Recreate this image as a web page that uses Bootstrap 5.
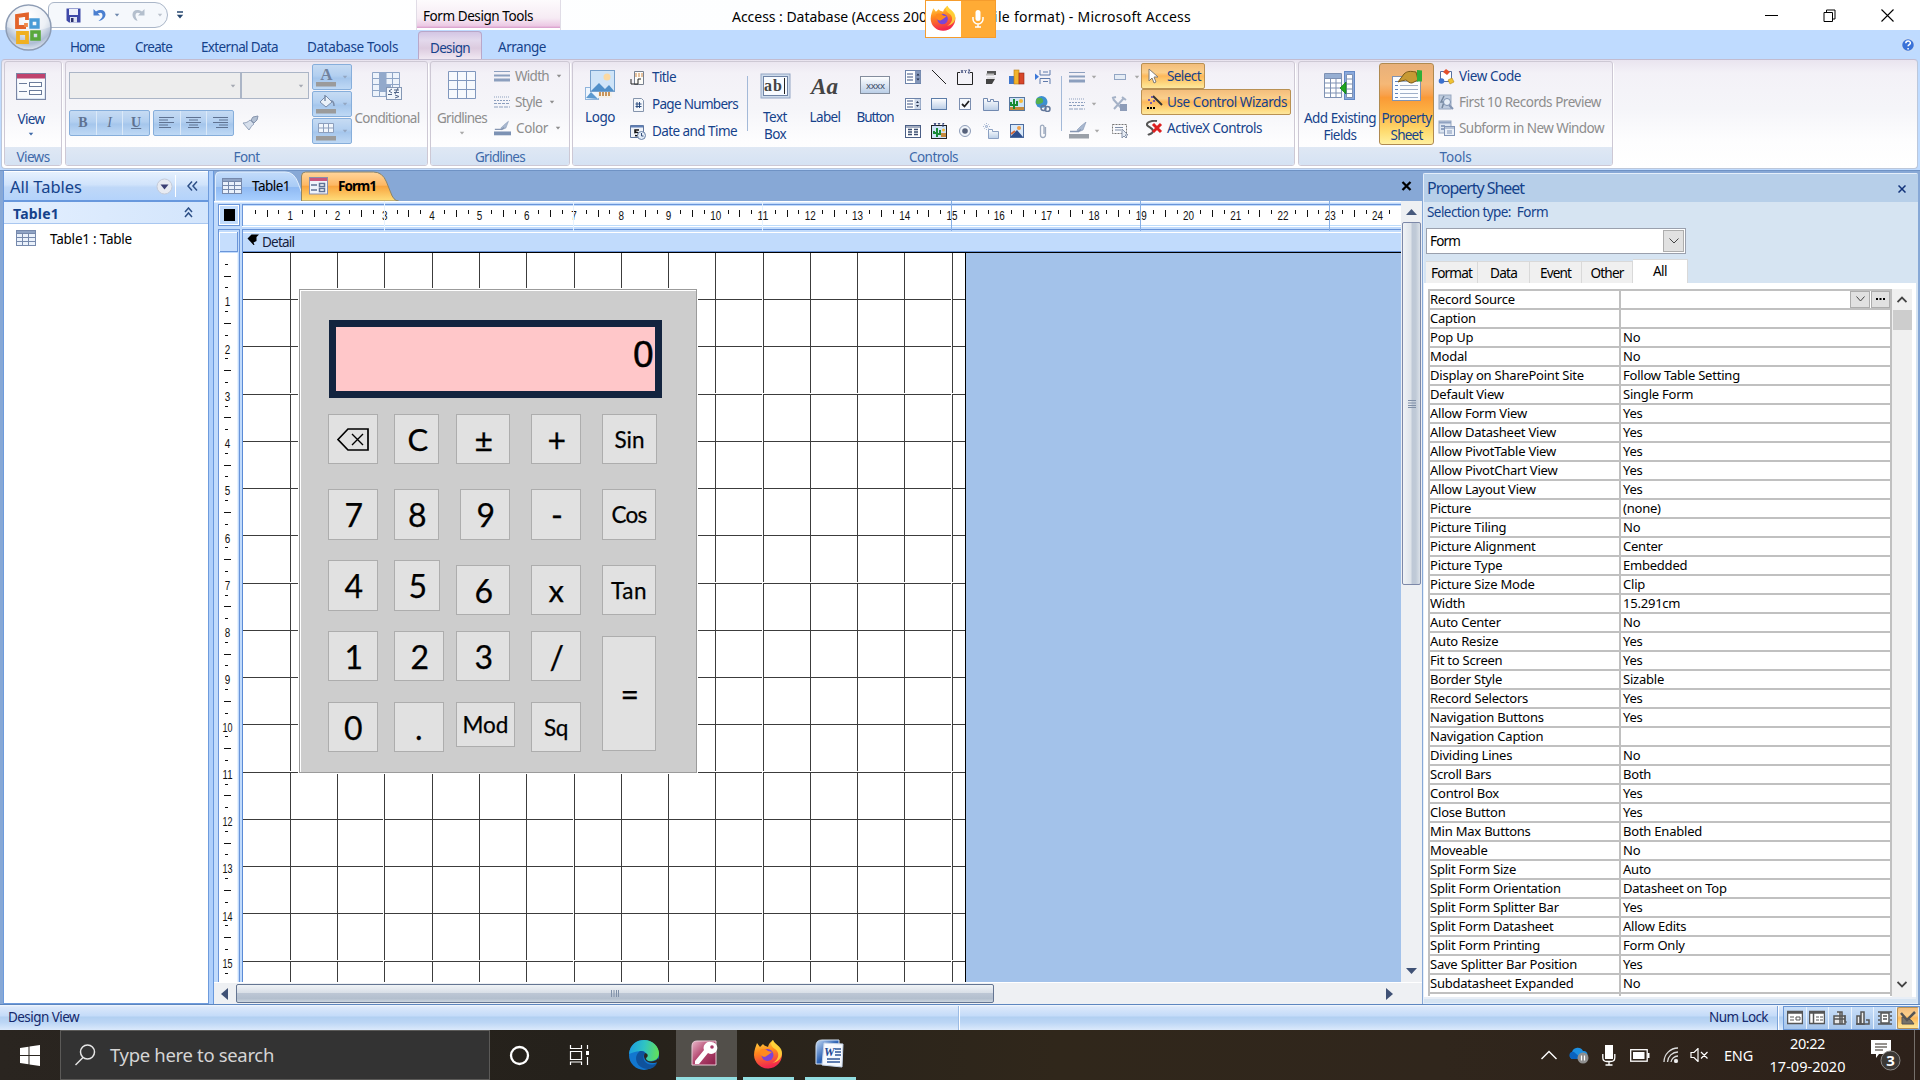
<!DOCTYPE html>
<html lang="en">
<head>
<meta charset="utf-8">
<title>Access : Database - Microsoft Access</title>
<link href="https://cdn.jsdelivr.net/npm/bootstrap@5.3.0/dist/css/bootstrap.min.css" rel="stylesheet">
<style>
body{width:1920px;height:1080px;overflow:hidden;font:13.5px/17px "Noto Sans","Open Sans",sans-serif;color:#15428b;background:#bfdbff}
svg{display:block;flex:none}
[data-w]{display:inline-block;white-space:pre;flex:none}
.titlebar{height:30px;background:linear-gradient(90deg,#fff 0,#fdfeff 40%,#fff 60%);color:#000}
.orb{position:absolute;left:4px;top:3px;z-index:5}
.qat{margin-left:48px;width:120px;height:26px;margin-top:2px;border:1px solid #aab6c8;border-radius:6px 13px 13px 0;background:#f5f8fc;padding-left:17px;gap:12px}
.ctx{width:145px;height:30px;background:linear-gradient(#fdfbfd,#f6ebf4 60%,#ecc9e4 86%,#d99ccb 93%,#fff 95%);border-left:1px solid #e0dce6;border-right:1px solid #e0dce6;padding:3px 0 0 6px}
.share{position:absolute;left:925px;top:0;width:71px;height:38px;border:1px solid #f59c2d;z-index:6;background:#fff}
.share .mic{background:#ffab35;width:34px}
.tabstrip{height:29px;background:#bfdbff}
.tabstrip [data-w]{padding-top:5px}
.dtab{width:64px;height:28px;margin-top:1px;border:1px solid #b9a7c9;border-bottom:0;border-radius:4px 4px 0 0;background:linear-gradient(#d3c6e4,#e3d9ec 30%,#dccbdf 60%,#f0e8f2)}
.ribbon{height:110px;margin:0 2px 0 1px;border:1px solid #bcc7da;border-top:1px solid #c3bcd0;border-radius:4px;background:linear-gradient(#e9e4ef,#f3f1f7 12%,#f5f5f9 45%,#fdfdfe 75%,#fff);padding:1px 2px}
.rgroup{height:105px;border:1px solid #cdc8d4;border-radius:3px;flex:none;overflow:hidden;box-shadow:1px 1px 0 #fff}
.rgroup .gbody{height:85px}
.rgroup .glabel{height:19px;background:linear-gradient(#dfe8f4,#d5e2f3);color:#3e6aaa;text-align:center;line-height:20px}
.rbig{flex:none;text-align:center}
.dis{color:#8d8d8d}
.bluebtns{border:1px solid #86aedb;border-radius:2px;background:linear-gradient(#c6dbf3,#b2cff0 45%,#a5c6ec 55%,#bfd9f5);color:#5f7291}
.bluebtns>div+div{border-left:1px solid #dbe9f8}
.hot{border:1px solid #b99153;background:linear-gradient(#f3bd7c,#fbcf8b 35%,#fdb85a 50%,#fedc86 85%,#fde79d);border-radius:2px}
.hotbig{border:1px solid #b08a50;border-radius:3px;background:linear-gradient(#e8b07a,#f5b877 25%,#f8a24e 38%,#fa9a36 42%,#fdb445 62%,#fedd72 85%,#fff0a0)}
.vsep{width:1px;height:55px;background:#a3b9d8;flex:none}
.ig{display:grid;grid-template-columns:repeat(6,26px);grid-template-rows:repeat(3,27px);justify-items:center;align-items:center}
.work{height:834px;background:#87a8d6;border-top:1px solid #6f92c4}
.navpane{width:206px;margin-left:3px;background:#fff;border:1px solid #6e9bdc;border-left:1px solid #6e9bdc;border-top:0}
.navhead{height:31px;background:linear-gradient(#e6f1fe,#d0e3fb 45%,#bfd8f8 55%,#b4d3fb);border-bottom:2px solid #6898dd;border-top:1px solid #fff}
.navgrp{height:22px;background:linear-gradient(90deg,#e3effe,#d3e5fc);border-bottom:1px solid #a9c7f0}
.split{width:5px;background:#aecffb;border-right:1px solid #6898dd}
.docarea{width:1208px}
.doctabs{height:30px;background:#87a8d6;color:#000}
.rulerarea{background:#bfdbff}
.designer{width:1187px}
.vscroll{width:21px;background:#eef0f3}
.canvas{width:1158px;height:729px;position:relative;overflow:hidden;background:#fff}
.calcpanel{position:absolute;left:86px;top:88px;width:398px;height:484px;background:#cdcdcd;border:1px solid #9b9b9b;box-shadow:inset 1px 1px 0 #fff, 0 0 0 1px #fff}
.calcdisp{position:absolute;left:116px;top:119px;width:333px;height:78px;background:#ffc7c9;border:7px solid #13243f;color:#000;font:37px/50px "Noto Sans",sans-serif;-webkit-text-stroke:.5px #000;text-align:right;padding:1px 1px 0 0}
.key{position:absolute;background:#e1e1e1;border:1px solid #adadad;color:#000;font-family:Lato,"Noto Sans",sans-serif;-webkit-text-stroke:.25px #000;display:flex;align-items:center;justify-content:center}
.hscroll{height:22px;background:#eef0f3;border-top:1px solid #fff}
.hthumb{width:758px;height:19px;border:1px solid #647592;border-radius:2px;background:linear-gradient(#f0f3f6,#d9dfe7 45%,#bcc6d4 50%,#b3bfce 80%,#ccd5df)}
.vthumb{width:19px;height:363px;border:1px solid #7c88a8;border-radius:2px;background:linear-gradient(90deg,#f0f3f6,#dfe4ea 45%,#bec8d6 55%,#c0cad7 75%,#dbe1e8)}
.psheet{width:495px;margin:2px 0 0 1px;background:#d6e4f2;border:1px solid #e4eefa;border-right:0;border-radius:2px 2px 0 0}
.pshead{height:28px;background:#b7cfe9;font-size:16px;padding:1px 12px 0 3px}
.pscombo{width:260px;height:26px;border:1px solid #9aa0ad;background:#fff;color:#000;margin:11px 0 0 2px;padding-left:3px}
.pscombo .dd,.sb{background:#e1e1e1;border:1px solid #adadad}
.pstabs{margin:5px 0 0 2px;height:24px;color:#000;font-size:13.6px}
.pstabs>div{width:52px;height:22px;background:#f0f0f0;border:1px solid #d9d9d9;border-left-width:0;border-bottom:0;line-height:22px;text-align:center}
.pstabs>.on{width:55px;height:24px;background:#fff;line-height:22px}
.pspage{background:#fff;height:716px;width:492px;padding:6px 0 0 4px;color:#000;border-bottom:2px solid #e8eef6}
.proptable{width:464px;height:707px;overflow:hidden;background:#c0c0c0;padding:2px 0 0 2px;font-size:13px;letter-spacing:-.22px}
.prow{height:19px;line-height:16px}
.prow>div{height:16.5px;background:#fff;overflow:hidden;white-space:nowrap}
.prow .pn{width:189px;margin-right:2px}
.prow .pv{width:269px;padding-left:2px}
.statusbar{height:26px;border-top:1px solid #5d86bf;background:linear-gradient(#f3f8fe 0,#dbe8fa 8%,#c4dbf9 44%,#b1cff1 48%,#bcd6f5 70%,#dbe9fb);color:#15286b;padding-left:8px}
.viewbtns{height:24px;width:137px;background:linear-gradient(#c8def8,#a5c4ea);border:1px solid #6a97d6}
.viewbtns>div{width:22.6px;height:22px;border-right:1px solid #eaf3fd}
.taskbar{height:50px;background:linear-gradient(90deg,#2a2520,#25211b 30%,#30271b 55%,#30261c 75%,#2d211a);color:#fff}
.searchbox{width:430px;height:50px;background:#333;border:1px solid #5b5a58;font-size:18.5px;color:#d5d5d5}
.tbtn{height:50px;border-bottom:3px solid #92dde0;margin-right:8px}
</style>
<script src="https://cdn.jsdelivr.net/npm/bootstrap@5.3.0/dist/js/bootstrap.bundle.min.js"></script>
</head>
<body class="position-relative d-flex flex-column">
<svg width="0" height="0" class="position-absolute">
<defs>
<linearGradient id="gw" x2="0" y2="1"><stop stop-color="#fff"/><stop offset="1" stop-color="#b9cde6"/></linearGradient>
<linearGradient id="gff" x2="0.2" y2="1"><stop stop-color="#ffe14a"/><stop offset=".45" stop-color="#ff8a1d"/><stop offset="1" stop-color="#f2274e"/></linearGradient>
<linearGradient id="gedge" x1="0" x2="1" y1="0.3" y2="0.4"><stop stop-color="#1b9de2"/><stop offset=".5" stop-color="#2fc3c4"/><stop offset="1" stop-color="#62e05a"/></linearGradient>
<linearGradient id="gacc" x2="1" y2="1"><stop stop-color="#e9b9ca"/><stop offset=".45" stop-color="#b64a72"/><stop offset="1" stop-color="#8b1e49"/></linearGradient>
<linearGradient id="gword" x2="1" y2="1"><stop stop-color="#c7dcf5"/><stop offset=".5" stop-color="#2f64b5"/><stop offset="1" stop-color="#173f8c"/></linearGradient>
<radialGradient id="gorb" cx=".5" cy=".25" r=".8"><stop stop-color="#fff"/><stop offset=".5" stop-color="#e2e8f1"/><stop offset=".75" stop-color="#aebdd3"/><stop offset="1" stop-color="#eef4fb"/></radialGradient>
</defs>
<symbol id="car" viewBox="0 0 8 5"><path d="M1 .8h6L4 4.4z" fill="currentColor"/></symbol>
<symbol id="formicon" viewBox="0 0 30 28"><rect x=".5" y=".5" width="29" height="26" fill="url(#gw)" stroke="#7a86a5"/><rect x="1" y="1" width="28" height="4.5" fill="#c0436e"/><rect x="1.5" y="6" width="27" height="19.500" fill="#f9fbfe"/><path d="M3 10.500h8M3 18.500h8" stroke="#6b7c9b"/><rect x="13.500" y="9.500" width="12" height="4" fill="#fff" stroke="#6b7c9b"/><rect x="13.500" y="17.500" width="12" height="4" fill="#fff" stroke="#6b7c9b"/></symbol>
<symbol id="formsmall" viewBox="0 0 19 18"><rect x=".5" y=".5" width="18" height="16.500" fill="#eef3fb" stroke="#8a8fae"/><rect x="1" y="1" width="17" height="3" fill="#c9567d"/><path d="M2 8h6M2 13h6" stroke="#5f7296" stroke-width="1.300"/><rect x="10.500" y="6.500" width="5" height="3" fill="#fff" stroke="#5f7296" stroke-width="1.500"/><rect x="10.500" y="11.500" width="5" height="3" fill="#fff" stroke="#5f7296" stroke-width="1.500"/></symbol>
<symbol id="tableicon" viewBox="0 0 20 16"><rect width="20" height="16" fill="#7689ac"/><path d="M1 4h5v3H1zM7 4h5v3H7zM13 4h6v3h-6zM1 8h5v3H1zM7 8h5v3H7zM13 8h6v3h-6zM1 12h5v3H1zM7 12h5v3H7zM13 12h6v3h-6z" fill="#eaf1fb"/><path d="M1 1h18v2H1z" fill="#8fa3c4"/></symbol>
<symbol id="lines3" viewBox="0 0 16 12"><path d="M0 1.500h16" stroke="#8c9fbe"/><path d="M0 5.500h16" stroke="#8c9fbe" stroke-width="2"/><path d="M0 10h16" stroke="#8c9fbe" stroke-width="3"/></symbol>
<symbol id="dash3" viewBox="0 0 16 12"><path d="M0 1h16" stroke="#8c9fbe" stroke-dasharray="1 1"/><path d="M0 4.500h16" stroke="#8c9fbe" stroke-dasharray="2 1"/><path d="M0 7.500h16" stroke="#8c9fbe" stroke-dasharray="3 1"/><path d="M0 11h16" stroke="#8c9fbe" stroke-dasharray="4 1"/></symbol>
<symbol id="brushc" viewBox="0 0 20 17"><path d="M17 0l-3 8-5 2-1-2 4-4z" fill="#a8b8d0" stroke="#8394b1" stroke-width=".6"/><path d="M1 9.500h8l3-2" stroke="#8696b2" fill="none" stroke-width="1.500"/><rect x="0" y="12" width="20" height="4.500" fill="var(--bar,#9aa0a8)"/></symbol>
<symbol id="ff" viewBox="0 0 30 30"><path d="M20 1c1 4 8 6 9 14a14 14 0 0 1-28 1C1 11 3 7 4 4l3 4 3-3c1 2 4 2 5 3 1-4 3-5 5-7z" fill="url(#gff)"/><path d="M20 1c-4 4-1 7 2 9 6 4 3 12-3 14 8-1 12-8 9-14-2-4-7-5-8-9z" fill="#ffd93b" opacity=".85"/><circle cx="14.500" cy="16" r="6" fill="#7b45d6"/><path d="M7 11c3-2 6-1 8 1l4 1-4 3c-2 1-3 3-6 1-2-1-2-4-2-6z" fill="#ff8a1d"/></symbol>
<symbol id="ic-list" viewBox="0 0 16 16"><rect x=".5" y="1.500" width="15" height="13" fill="#fff" stroke="#6d83aa"/><path d="M2 5h6M2 8h6M2 11h6" stroke="#7d8cab" stroke-width="1.500"/><rect x="10" y="2" width="5.500" height="12" fill="#8496b8"/><path d="M11.500 6.500h3L13 4.500zM11.500 9.500h3L13 11.500z" fill="#1e2c48"/></symbol>
</svg>

<!-- Title bar -->
<div class="titlebar d-flex">
  <div class="qat d-flex align-items-center">
    <svg width="15" height="15" viewBox="0 0 15 15"><path d="M.5.500h14v14H3l-2.500-2z" fill="#3f49a8"/><rect x="3" y="1" width="9" height="6" fill="#eef1fb"/><rect x="4" y="9" width="7" height="5.500" fill="#dfe4f4"/><rect x="5" y="10" width="2.500" height="4" fill="#2a2f6b"/></svg>
    <svg width="13" height="14" viewBox="0 0 13 14"><path d="M.5 1v6.500H7L4.800 5.300C8 3.800 9.500 5 9.500 7.500c0 2-1.500 3.500-4 5.500 4-.5 7-3.500 7-6.500C12.500 2 8 .5 3 3.400z" fill="#4a7fd0"/></svg>
    <svg width="6" height="4" style="color:#6e87ad;margin-left:-4px"><use href="#car"/></svg>
    <svg width="13" height="14" viewBox="0 0 13 14"><path d="M12.500 1v6.500H6l2.200-2.200C5 3.800 3.500 5 3.500 7.500c0 2 1.500 3.500 2 5.500C2 12 .5 9 .5 6.500.5 2 5 .5 10 3.400z" fill="#b4bfcd"/></svg>
    <svg width="6" height="4" style="color:#bbc2cc"><use href="#car"/></svg>
  </div>
  <svg class="align-self-center" style="margin-left:8px" width="8" height="8" viewBox="0 0 8 8"><path d="M1 1h6" stroke="#27476f" stroke-width="1.500"/><path d="M.8 3.800h6.400L4 7.500z" fill="#27476f"/></svg>
  <div class="ctx d-flex align-items-center" style="margin-left:232px"><span data-w="110">Form Design Tools</span></div>
  <div class="d-flex align-items-center" style="margin-left:171px;height:32px;font-size:14px"><span data-w="187">Access : Database (Access 20</span><span data-w="79">02 - 2003 fi</span><span data-w="193">le format) - Microsoft Access</span></div>
  <div class="d-flex align-items-center" style="margin-left:574px;gap:45px">
    <svg width="13" height="13"><path d="M0 6.500h13" stroke="#000"/></svg>
    <svg width="13" height="13" viewBox="0 0 13 13"><path d="M1 3.500h8.500v9H1zM3.500 3.500V1H12v9H9.500" fill="none" stroke="#000"/></svg>
    <svg width="13" height="13"><path d="M.5.500l12 12M12.500.500l-12 12" stroke="#000" stroke-width="1.100"/></svg>
  </div>
</div>
<svg class="orb" width="50" height="50" viewBox="0 0 50 50"><circle cx="24.500" cy="24.500" r="22.500" fill="url(#gorb)" stroke="#8d9cb4" stroke-width="1.500"/><path d="M3 24a21.500 21.500 0 0 1 43 0c-14 5-29 5-43 0z" fill="#fff" opacity=".35"/>
<g fill="none" stroke-width="3.800"><path d="M22 24h-9V13l10-1.500v5.500" stroke="#e2632b"/><path d="M22 24v-4" stroke="#f08a4a"/><path d="M27 19v-2h7v7h-7z" stroke="#4a9bd6" stroke-width="3.400"/><path d="M23 28v11h-9v-9h9" stroke="#f0b021"/><path d="M28 29h7v7h-7z" stroke="#58a83c" stroke-width="3.600"/></g></svg>
<div class="share d-flex">
  <svg width="35" height="36" viewBox="-4 -3 37 38"><use href="#ff" width="28" height="30"/></svg>
  <div class="mic d-flex align-items-center justify-content-center"><svg width="12" height="18" viewBox="0 0 12 18"><rect x="3.500" width="5" height="11" rx="2.500" fill="#fff"/><path d="M1 7v2a5 5 0 0 0 10 0V7M6 14v3M3 17h6" fill="none" stroke="#fff" stroke-width="1.500"/></svg></div>
</div>

<!-- Ribbon tabs -->
<div class="tabstrip d-flex align-items-center" style="padding-left:70px">
  <span data-w="34">Home</span><span data-w="37" style="margin-left:31px">Create</span><span data-w="77" style="margin-left:29px">External Data</span><span data-w="91" style="margin-left:29px">Database Tools</span>
  <div class="dtab d-flex align-items-center justify-content-center" style="margin-left:20px"><span data-w="40">Design</span></div>
  <span data-w="48" style="margin-left:16px">Arrange</span>
  <svg class="ms-auto me-1" width="16" height="16" viewBox="0 0 16 16"><circle cx="8" cy="8" r="6.500" fill="#3a72d8" stroke="#c8dcf7" stroke-width="1.500"/><path d="M5.800 6.300c0-3 4.600-3 4.600-.3 0 1.600-2.300 1.600-2.300 3.300M8.100 11v1.500" fill="none" stroke="#fff" stroke-width="1.500"/></svg>
</div>

<!-- Ribbon -->
<div class="ribbon d-flex">
  <div class="rgroup" style="width:58px"><div class="gbody d-flex flex-column align-items-center pe-1">
    <svg style="margin-top:11px" width="30" height="28"><use href="#formicon"/></svg><span class="mt-2" style="padding-top:2px" data-w="27">View</span><svg class="mt-1" style="color:#3f6aa8" width="6" height="4"><use href="#car"/></svg></div>
    <div class="glabel"><span data-w="33">Views</span></div></div>

  <div class="rgroup" style="width:363px;margin-left:3px"><div class="gbody d-flex">
    <div style="width:243px;padding:10px 0 0 3px">
      <div class="d-flex" style="color:#a5a9b2"><div class="d-flex justify-content-end align-items-center pe-1" style="width:174px;height:27px;border:1px solid #abb5c6;background:#ededed"><svg width="6" height="4"><use href="#car"/></svg></div><div class="d-flex justify-content-end align-items-center pe-1" style="width:69px;height:27px;border:1px solid #abb5c6;background:#ededed"><svg width="6" height="4"><use href="#car"/></svg></div></div>
      <div class="d-flex align-items-center" style="margin-top:11px">
        <div class="bluebtns d-flex align-items-center text-center" style="width:81px;height:26px;font:bold 14px/24px 'Liberation Serif',serif"><div style="width:26px">B</div><div class="fst-italic" style="width:27px;font-weight:400">I</div><div class="text-decoration-underline" style="width:27px">U</div></div>
        <div class="bluebtns d-flex align-items-center" style="width:81px;height:26px;margin-left:3px">
          <div class="d-flex justify-content-center align-items-center h-100" style="width:26px"><svg width="15" height="12"><path d="M0 .5h15M0 3h9M0 5.500h15M0 8h9M0 10.500h12" stroke="#5f7291"/></svg></div>
          <div class="d-flex justify-content-center align-items-center h-100" style="width:27px"><svg width="15" height="12"><path d="M0 .5h15M3 3h9M0 5.500h15M3 8h9M2 10.500h11" stroke="#5f7291"/></svg></div>
          <div class="d-flex justify-content-center align-items-center h-100" style="width:27px"><svg width="15" height="12"><path d="M0 .5h15M6 3h9M0 5.500h15M6 8h9M3 10.500h12" stroke="#5f7291"/></svg></div></div>
        <svg style="margin-left:8px" width="17" height="16" viewBox="0 0 17 16"><path d="M16 1l-5 1-2 3 3 3 3-3z" fill="#b3c0d3" stroke="#8795ad"/><path d="M8 5l4 4c-2 1-3 3-5 6L1 8c3 0 5-1 7-3z" fill="#d6dfec" stroke="#94a3bb"/></svg>
      </div></div>
    <div class="d-flex flex-column" style="margin:2px 0 0 3px;gap:1px;color:#a3acb9">
      <div class="bluebtns d-flex align-items-center" style="width:40px;height:26px;padding-left:3px"><svg width="21" height="24" viewBox="0 0 21 24"><text x="10.500" y="15" text-anchor="middle" font-family="Liberation Serif" font-weight="bold" font-size="17" fill="#70829e">A</text><rect y="17" width="20" height="4.500" fill="#9b9b9b"/></svg><svg style="margin-left:5px;color:#93a6c1" width="6" height="4"><use href="#car"/></svg></div>
      <div class="bluebtns d-flex align-items-center" style="width:40px;height:26px;padding-left:3px"><svg width="21" height="24" viewBox="0 0 21 24"><path d="M10 4l6 6-6 5-6-5z" fill="#eaf1f9" stroke="#7a8ca9"/><path d="M9 9V3M15 9c3 0 3 3 3 5" stroke="#7a8ca9" fill="none" stroke-width="1.500"/><rect y="17" width="20" height="4.500" fill="#9b9b9b"/></svg><svg style="margin-left:5px;color:#93a6c1" width="6" height="4"><use href="#car"/></svg></div>
      <div class="bluebtns d-flex align-items-center" style="width:40px;height:26px;padding-left:3px"><svg width="21" height="24" viewBox="0 0 21 24"><path d="M2.500 4.500h15v9h-15zM7.500 4.500v9M12.500 4.500v9M2.500 9h15" fill="#f1f6fc" stroke="#8d9fbd"/><rect y="17" width="20" height="4.500" fill="#9b9b9b"/></svg><svg style="margin-left:5px;color:#93a6c1" width="6" height="4"><use href="#car"/></svg></div>
    </div>
    <div class="rbig dis" style="margin:9px 0 0 2px;width:66px"><svg class="mx-auto" width="32" height="30" viewBox="0 0 32 30"><path d="M1.500 1.500h27v24h-27zM1.500 7.500h27M1.500 13.500h27M1.500 19.500h27M8.500 1.500v24M15 1.500v24M21.500 1.500v24" fill="#edf3fb" stroke="#8fa5c6"/><path d="M8 1h7v12h5v8H8z" fill="#92a9cb"/><rect x="15.500" y="16.500" width="15" height="12" fill="#f2f6fb" stroke="#8497b5"/><path d="M21 18l-3 2 3 2M17 23.500h4M23 19h5M23 21.500h5M27 17l-3 6M24 24l4 1.500-4 1.500" fill="none" stroke="#4f6488"/></svg><span data-w="65" style="margin-top:9px">Conditional</span></div>
    </div><div class="glabel"><span data-w="26">Font</span></div></div>

  <div class="rgroup" style="width:140px;margin-left:2px"><div class="gbody d-flex dis">
    <div class="rbig" style="width:52px;margin:9px 0 0 5px"><svg class="mx-auto" width="29" height="29" viewBox="0 0 29 29"><path d="M.5.500h27v27H.5zM9.500.500v27M18.500.500v27M.5 9.500h27M.5 18.500h27" fill="#f6f9fd" stroke="#8097bd"/></svg><span data-w="50" style="margin-top:10px">Gridlines</span><svg class="mx-auto mt-1" width="6" height="4" style="color:#a9a9a9"><use href="#car"/></svg></div>
    <div style="margin:1px 0 0 6px">
      <div class="d-flex align-items-center" style="height:26px"><svg width="16" height="12"><use href="#lines3"/></svg><span style="margin-left:5px" data-w="34">Width</span><svg style="margin-left:7px" width="6" height="4"><use href="#car"/></svg></div>
      <div class="d-flex align-items-center" style="height:26px"><svg width="16" height="12"><use href="#dash3"/></svg><span style="margin-left:5px" data-w="27">Style</span><svg style="margin-left:7px" width="6" height="4"><use href="#car"/></svg></div>
      <div class="d-flex align-items-center" style="height:26px;--bar:#7c92b4"><svg width="17" height="17"><use href="#brushc"/></svg><span style="margin-left:5px" data-w="32">Color</span><svg style="margin-left:7px" width="6" height="4"><use href="#car"/></svg></div>
    </div></div><div class="glabel"><span data-w="50">Gridlines</span></div></div>

  <div class="rgroup" style="width:723px;margin-left:2px"><div class="gbody d-flex">
    <div class="rbig" style="width:32px;margin:7px 0 0 11px"><svg width="32" height="32" viewBox="0 0 32 32"><rect x="1.500" y="18.500" width="13" height="12" fill="#eef5fd" stroke="#8fb4dc"/><path d="M2 29l5-6 7 7z" fill="#5d99cf"/><rect x="14" y="21" width="14" height="8" fill="#f5f1ea"/><path d="M15 25h11" stroke="#c9955b" stroke-width="4" stroke-dasharray="2 1"/><rect x="6.500" y="1.500" width="24" height="21" fill="#cfe4f8" stroke="#77a0cc"/><circle cx="23" cy="8" r="3.500" fill="#fbd9a2"/><path d="M7 22l8-8 6 6 4-4 5 6z" fill="#4f8fc9"/></svg><span data-w="30" style="margin-top:8px">Logo</span></div>
    <div style="margin:2px 0 0 14px">
      <div class="d-flex align-items-center" style="height:27px"><svg width="16" height="16" viewBox="0 0 16 16"><path d="M4.500 1.500h9v13h-9z" fill="#fdfcf8" stroke="#77808f"/><path d="M5 4h8M5 6h8" stroke="#cc8545" stroke-dasharray="2 1"/><path d="M1 9v5h7v-5h3" fill="none" stroke="#222"/></svg><span style="margin-left:6px" data-w="24">Title</span></div>
      <div class="d-flex align-items-center" style="height:27px"><svg width="16" height="16" viewBox="0 0 16 16"><path d="M3.500 1.500h8l2 2v11h-10z" fill="#f4f7fb" stroke="#8594ac"/><path d="M7 5v6M9.500 5v6M5.500 7h6M5.500 9.500h6" stroke="#2c4d80"/></svg><span style="margin-left:6px" data-w="86">Page Numbers</span></div>
      <div class="d-flex align-items-center" style="height:27px"><svg width="16" height="16" viewBox="0 0 16 16"><path d="M.5 1.500h13v12H.5z" fill="#f0f3f8" stroke="#5f769e"/><path d="M1 2.500h12" stroke="#5f7fb5" stroke-width="2"/><path d="M9 6H5v2.500c5-1 5 4 0 3" fill="none" stroke="#111" stroke-width="1.500"/><circle cx="11.500" cy="11.500" r="4" fill="#e3ecf7" stroke="#6880a6"/><path d="M11.500 9v3h2" stroke="#36507c" fill="none"/></svg><span style="margin-left:6px" data-w="85">Date and Time</span></div></div>
    <div class="vsep" style="margin:14px 0 0 9px"></div>
    <div class="rbig" style="width:42px;margin:11px 0 0 6px"><svg class="mx-auto" width="31" height="26" viewBox="0 0 31 26"><rect x="1" y="1" width="29" height="24" fill="#cfdcec" stroke="#93a6c4"/><rect x="3.500" y="3.500" width="24" height="19" fill="#f8fbff" stroke="#6f83a5"/><text x="4" y="18" font-family="Liberation Serif" font-weight="bold" font-size="16" textLength="18" fill="#444">ab</text><path d="M24.500 5v16" stroke="#222"/></svg><span data-w="24" style="margin-top:10px">Text</span><br><span data-w="22">Box</span></div>
    <div class="rbig" style="width:42px;margin:11px 0 0 8px"><svg class="mx-auto overflow-visible" width="32" height="26" viewBox="0 0 32 26"><text x="2" y="21" font-family="Liberation Serif" font-style="italic" font-weight="bold" font-size="24" textLength="27" lengthAdjust="spacingAndGlyphs" fill="#444">Aa</text></svg><span data-w="31" style="margin-top:10px">Label</span></div>
    <div class="rbig" style="width:42px;margin:14px 0 0 8px"><svg class="mx-auto" width="31" height="19" viewBox="0 0 31 19"><rect x=".5" y=".5" width="29" height="17" fill="url(#gw)" stroke="#838d9d"/><text x="6" y="12.500" font-size="9.500" textLength="19" fill="#3b4a66">xxxx</text></svg><span data-w="37" style="margin-top:14px">Button</span></div>
    <div class="ig" id="ctlgrid" style="margin:1px 0 0 4px"></div>
    <div class="vsep" style="margin:14px 0 0 5px"></div>
    <div style="margin:1px 0 0 7px;width:73px;color:#a7a7a7">
      <div class="d-flex align-items-center" style="height:27px"><svg width="16" height="12"><use href="#lines3"/></svg><svg style="margin:0 17px 0 6px" width="6" height="4"><use href="#car"/></svg><svg width="12" height="6"><rect x=".5" y=".5" width="11" height="5" fill="#e5ecf5" stroke="#93a6c4"/></svg><svg style="margin-left:8px" width="6" height="4"><use href="#car"/></svg></div>
      <div class="d-flex align-items-center" style="height:27px"><svg width="16" height="12"><use href="#dash3"/></svg><svg style="margin:0 14px 0 6px" width="6" height="4"><use href="#car"/></svg><svg width="17" height="16" viewBox="0 0 17 16"><path d="M2 3l10 11M13 2L3 13M1 2l4-1M11 1l4 3" stroke="#a5b2c7" stroke-width="2" fill="none"/><rect x="9" y="8" width="7" height="7" fill="#8d9cb8"/></svg></div>
      <div class="d-flex align-items-center" style="height:27px"><svg width="20" height="17"><use href="#brushc"/></svg><svg style="margin:0 12px 0 5px" width="6" height="4"><use href="#car"/></svg><svg width="16" height="16" viewBox="0 0 16 16"><path d="M.5 1.500h14v9H.5z" fill="none" stroke="#777" stroke-dasharray="2 1"/><path d="M3 4.500h8M3 7h6" stroke="#7d8da8"/><path d="M10 6v9l2-2 2 2 1-1-2-2h3z" fill="#e8edf4" stroke="#8794aa"/></svg></div></div>
    <div style="margin:1px 0 0 -1px">
      <div class="hot d-flex align-items-center" style="width:64px;height:26px;padding-left:6px"><svg width="12" height="16" viewBox="0 0 12 16"><path d="M1 1v12l3-3 2 5 2-1-2-5h4z" fill="#fff" stroke="#7e7b76"/></svg><span style="margin-left:7px" data-w="34">Select</span></div>
      <div class="hot d-flex align-items-center" style="width:150px;height:26px;padding-left:4px"><svg width="17" height="16" viewBox="0 0 17 16"><path d="M7 2l9 9" stroke="#333" stroke-width="2"/><path d="M2 6h2M5 3h2M4 9h2M7 7h2" stroke="#7b5fa8" stroke-width="2"/><path d="M1 14h9" stroke="#000" stroke-width="2" stroke-dasharray="2 1"/></svg><span style="margin-left:4px" data-w="120">Use Control Wizards</span></div>
      <div class="d-flex align-items-center" style="height:26px;padding-left:5px"><svg width="17" height="16" viewBox="0 0 17 16"><path d="M11 1C5 0 0 3 1 5c1 2 6 3 6 6s-4 3-5 4" fill="none" stroke="#555" stroke-width="2"/><path d="M7 4l8 8M15 4l-8 8" stroke="#dd2020" stroke-width="3"/></svg><span style="margin-left:4px" data-w="95">ActiveX Controls</span></div></div>
    </div><div class="glabel"><span data-w="49">Controls</span></div></div>

  <div class="rgroup" style="width:315px;margin-left:3px"><div class="gbody d-flex">
    <div class="rbig" style="width:74px;margin:8px 0 0 4px"><svg class="mx-auto" width="32" height="31" viewBox="0 0 32 31"><path d="M.5 3.500h17v24H.5zM.5 8.500h17M.5 13h17M.5 18h17M.5 23h17M6.500 4v23M12 4v23" fill="#fff" stroke="#7e91b3"/><path d="M1 4h16v4H1z" fill="#96aed2"/><rect x="20.500" y="1.500" width="10" height="28" fill="#8aa9dc" stroke="#6488c4"/><path d="M22.500 4.500h6v23h-6zM22.500 9h6M22.500 14h6M22.500 19h6M22.500 23.500h6" fill="#fff" stroke="#7e91b3"/><path d="M16 18l6-6v12z" fill="#1fa51f" stroke="#0c7a12" stroke-width=".7"/></svg><span data-w="72" style="margin-top:9px">Add Existing</span><br><span data-w="33">Fields</span></div>
    <div class="hotbig rbig" style="width:55px;height:82px;margin:1px 0 0 2px;padding-top:5px"><svg class="mx-auto" width="32" height="33" viewBox="0 0 32 33"><rect x="1.500" y="7.500" width="28" height="24" fill="#fbfdff" stroke="#8093b3"/><path d="M4 12.500h3M4 16.500h3M4 20.500h3M4 24.500h3M4 28.500h3" stroke="#5d83bd"/><path d="M9 12.500h18M9 16.500h18M9 20.500h18M9 24.500h18M9 28.500h18" stroke="#9fb0c9"/><path d="M7 13l6-8c3-3 6-3 12-2l2 8-6 3c-3 0-3-1-6-3l-5 1z" fill="#c79a34" stroke="#7a5a18"/><path d="M26 1l5 .5v11h-5z" fill="#2fae38"/></svg><span data-w="50" style="margin-top:8px">Property</span><br><span data-w="32">Sheet</span></div>
    <div style="margin:1px 0 0 4px">
      <div class="d-flex align-items-center" style="height:26px"><svg width="17" height="17" viewBox="0 0 17 17"><path d="M2.500 3.500h11v10h-11z" fill="#fff" stroke="#5870a0"/><path d="M8 1l4 3-3 3-4-3z" fill="#e4502c"/><circle cx="3.500" cy="13" r="2.800" fill="#3a70cf"/><path d="M10 12l4-2 2 4-4 2z" fill="#f0c233" stroke="#b98615" stroke-width=".6"/></svg><span class="ms-1" data-w="62">View Code</span></div>
      <div class="d-flex align-items-center dis" style="height:26px"><svg width="17" height="17" viewBox="0 0 17 17"><rect x="1" y="1" width="12" height="14" fill="#bfccdf" stroke="#97a7c0"/><path d="M6 2L3 8h3l-2 6" stroke="#75879f" stroke-width="1.500" fill="none"/><circle cx="9" cy="8" r="3.500" fill="#e7eef7" stroke="#7d91b1"/><path d="M11 11l4 4" stroke="#8395b3" stroke-width="2"/></svg><span class="ms-1" data-w="142">First 10 Records Preview</span></div>
      <div class="d-flex align-items-center dis" style="height:26px"><svg width="17" height="17" viewBox="0 0 17 17"><rect x="1" y="1" width="12" height="12" fill="#dce5f1" stroke="#97a7c0"/><path d="M1 2.500h12M3 6h4M3 9h3" stroke="#8fa2c1" stroke-width="2"/><rect x="6.500" y="6.500" width="10" height="9" fill="#eaf0f8" stroke="#8195b7"/><path d="M6.500 8h10M9 11h5M9 13h5" stroke="#8195b7"/></svg><span class="ms-1" data-w="145">Subform in New Window</span></div></div>
    </div><div class="glabel"><span data-w="32">Tools</span></div></div>
</div>

<!-- Workspace -->
<div class="work d-flex" style="margin-top:1px">
  <div class="navpane flex-shrink-0">
    <div class="navhead d-flex align-items-center"><span style="margin-left:6px;font-size:16.5px;padding-top:1px" data-w="72">All Tables</span>
      <svg style="margin-left:74px" width="17" height="17"><circle cx="8.500" cy="8.500" r="7.500" fill="#e8ebf2" stroke="#c4cbd9"/><path d="M4.500 6.500h8l-4 5z" fill="#3b3f74"/></svg>
      <div style="width:1px;height:22px;background:#fff;margin-left:2px"></div>
      <svg style="margin-left:11px" width="11" height="10"><path d="M5 .5l-4 4.500 4 4.500M10 .5l-4 4.500 4 4.500" fill="none" stroke="#2d4f86" stroke-width="1.500"/></svg></div>
    <div class="navgrp d-flex align-items-center fw-bold" style="font-size:14px"><span style="margin-left:9px;padding-top:1px" data-w="46">Table1</span><svg style="margin-left:125px" width="9" height="11"><path d="M1 5l3.500-4L8 5M1 10l3.500-4L8 10" fill="none" stroke="#2d4f86" stroke-width="1.500"/></svg></div>
    <div class="d-flex align-items-center text-black" style="height:28px;padding-left:12px"><svg width="20" height="16"><use href="#tableicon"/></svg><span style="margin-left:14px;padding-top:2px" data-w="82">Table1 : Table</span></div>
  </div>
  <div class="split flex-shrink-0"></div>

  <div class="docarea flex-shrink-0 d-flex flex-column">
    <div class="doctabs d-flex">
      <div class="position-relative" style="width:185px;height:30px"><svg class="position-absolute top-0 start-0" width="185" height="30"><defs><linearGradient id="t1" x2="0" y2="1"><stop stop-color="#c3dcfb"/><stop offset=".5" stop-color="#a9cbf5"/><stop offset=".52" stop-color="#8fb9f2"/><stop offset="1" stop-color="#a9d0ff"/></linearGradient><linearGradient id="t2" x2="0" y2="1"><stop stop-color="#ffd59c"/><stop offset=".45" stop-color="#fdb864"/><stop offset=".5" stop-color="#f9a640"/><stop offset="1" stop-color="#ffdf7c"/></linearGradient></defs><path d="M1.500 30V5q0-4 4-4h66q9 0 13 12l6 17z" fill="url(#t1)" stroke="#e0edfc"/><path d="M87.500 30V5q0-4 4-4h68q9 0 13 10l4 10q3 9 8 9z" fill="url(#t2)" stroke="#8b8468"/></svg>
        <div class="position-relative d-flex align-items-center" style="height:30px;padding-left:8px"><svg width="20" height="16"><use href="#tableicon"/></svg><span style="margin-left:10px" data-w="38">Table1</span><svg style="margin-left:19px" width="19" height="18"><use href="#formsmall"/></svg><span class="fw-bold" style="margin-left:10px" data-w="38">Form1</span></div></div>
      <svg class="ms-auto align-self-center" style="margin-right:10px" width="11" height="10"><path d="M1.500 1l8 8M9.500 1l-8 8" stroke="#000" stroke-width="2.300"/></svg>
    </div>
    <div class="d-flex rulerarea" style="height:781px">
      <div class="designer">
        <svg id="rul" width="1187" height="52"></svg>
        <div class="d-flex" style="height:729px"><svg id="vrul" width="29" height="729"></svg>
          <div class="canvas"><svg id="gridsvg" class="position-absolute top-0 start-0" width="1158" height="729"></svg><div id="calc" style="position:absolute;left:-30px;top:-52px"></div></div></div>
      </div>
      <div class="vscroll d-flex flex-column align-items-center"><svg style="margin:8px 0 7px" width="11" height="6"><path d="M0 6h11L5.500 0z" fill="#47597c"/></svg>
        <div class="vthumb d-flex align-items-center justify-content-center"><svg width="8" height="8"><path d="M0 .5h8M0 3h8M0 5.500h8M0 7.500h8" stroke="#8090a8"/></svg></div>
        <svg class="mt-auto" style="margin-bottom:8px" width="11" height="6"><path d="M0 0h11L5.500 6z" fill="#3f5175"/></svg></div>
    </div>
    <div class="hscroll d-flex align-items-center"><svg style="margin:0 8px 0 7px" width="7" height="12"><path d="M7 0v12L0 6z" fill="#3f5175"/></svg><div class="hthumb d-flex align-items-center justify-content-center"><svg width="8" height="7"><path d="M.5 0v7M3 0v7M5.500 0v7M7.500 0v7" stroke="#8090a8"/></svg></div><svg class="ms-auto" style="margin-right:29px" width="7" height="12"><path d="M0 0v12l7-6z" fill="#3f5175"/></svg></div>
  </div>

  <div class="psheet flex-shrink-0">
    <div class="pshead d-flex align-items-center justify-content-between"><span data-w="97">Property Sheet</span><svg width="8" height="8"><path d="M.5.500l7 7M7.500.500l-7 7" stroke="#12337a" stroke-width="1.500"/></svg></div>
    <div style="height:17px;padding-left:3px;margin-top:-2px;line-height:25px"><span data-w="121">Selection type:  Form</span></div>
    <div class="pscombo d-flex align-items-center"><span data-w="30">Form</span><div class="dd ms-auto d-flex align-items-center justify-content-center" style="width:21px;height:22px;margin-right:1px"><svg width="10" height="6"><path d="M.5.500l4.500 4.500L9.500.500" fill="none" stroke="#444"/></svg></div></div>
    <div class="pstabs d-flex align-items-end"><div><span data-w="41">Format</span></div><div><span data-w="27">Data</span></div><div><span data-w="31">Event</span></div><div style="width:51px"><span data-w="33">Other</span></div><div class="on"><span data-w="14">All</span></div></div>
    <div class="pspage d-flex"><div class="proptable" id="props"></div>
      <div class="d-flex flex-column align-items-center" style="width:20px;background:#f0f0f0"><svg style="margin:7px 0" width="10" height="7"><path d="M.5 6L5 1.500 9.500 6" fill="none" stroke="#444" stroke-width="1.800"/></svg><div style="width:19px;height:20px;background:#cdcdcd"></div><svg class="mt-auto" style="margin-bottom:9px" width="10" height="7"><path d="M.5 1L5 5.500 9.500 1" fill="none" stroke="#444" stroke-width="1.800"/></svg></div></div>
  </div>
</div>

<!-- Status bar -->
<div class="statusbar d-flex align-items-center"><span data-w="71">Design View</span><div style="margin-left:879px;width:2px;height:24px;border-left:1px solid #9bbbe4;background:#fff"></div><span style="margin-left:749px" data-w="59">Num Lock</span>
  <div style="margin-left:9px;width:2px;height:24px;border-left:1px solid #7ba3d9;background:#fff"></div>
  <div class="viewbtns d-flex ms-auto" id="vb"></div></div>

<!-- Taskbar -->
<div class="taskbar d-flex align-items-center">
  <svg style="margin-left:20px" width="20" height="21" viewBox="0 0 20 21"><path d="M0 3l8.500-1.200V10H0zM9.500 1.600L20 0v10H9.500zM0 11h8.500v8.200L0 18zM9.500 11H20v10L9.500 19.400z" fill="#fff"/></svg>
  <div class="searchbox d-flex align-items-center" style="margin-left:20px"><svg style="margin-left:14px" width="21" height="22"><circle cx="12.500" cy="8" r="7" fill="none" stroke="#e6e6e6" stroke-width="1.500"/><path d="M8 13.500L.5 21" stroke="#e6e6e6" stroke-width="1.500"/></svg><span style="margin:-2px 0 0 14px" data-w="164">Type here to search</span></div>
  <svg style="margin-left:19px" width="21" height="21"><circle cx="10.500" cy="10.500" r="8.500" fill="none" stroke="#fff" stroke-width="2.300"/></svg>
  <svg style="margin-left:39px" width="20" height="20"><path d="M1.500 0v3.500h11V0M1.500 6.500h11v8h-11zM1.500 20v-3h11v3M18.500 0v4M18.500 12v8" fill="none" stroke="#fff" stroke-width="1.200"/><rect x="17" y="6" width="3" height="4" fill="#fff"/></svg>
  <svg style="margin-left:39px" width="32" height="32" viewBox="0 0 32 32"><circle cx="16" cy="16" r="15" fill="#1277cf"/><path d="M1 15C2 5 9 1 16 1c9 0 15 7 15 13 0 6-4 8-9 8-3 0-5-2-4-3 2-2 1-7-5-7-6 0-11 3-12 3z" fill="url(#gedge)"/><path d="M12 12c-8 6-3 18 8 18 4 0 8-3 9-6-9 5-17-3-12-10-1-2-3-2-5-2z" fill="#0f529c"/><path d="M17 14c4 1 3 4 1 5 0 2 2 3.500 5 3.500 3 0 6-1.500 7-3.500l1.500 4-5.500 1c-8 1-12-6-9-10z" fill="#2b261f"/></svg>
  <div class="tbtn d-flex justify-content-center align-items-center" style="width:61px;margin-left:16px;background:#524f4a;margin-right:6px"><svg style="margin-right:4px" width="27" height="27" viewBox="0 0 27 27"><path d="M1 6q0-5 5-5h19v24H1z" fill="url(#gacc)" stroke="#e8cdd7"/><path d="M20 2a6 6 0 1 1-3 11L8 24H4v-3l9-11a6 6 0 0 1 7-8z" fill="#fff"/><circle cx="21" cy="7" r="1.800" fill="#a83c68"/></svg></div>
  <div class="tbtn d-flex justify-content-center align-items-center" style="width:51px;margin-right:11px"><svg style="margin-right:2px" width="30" height="30"><use href="#ff"/></svg></div>
  <div class="tbtn d-flex justify-content-center align-items-center" style="width:51px"><svg style="margin-right:2px" width="29" height="29" viewBox="0 0 29 29"><path d="M1 7q0-6 6-6h17v24H1z" fill="url(#gword)" stroke="#d5e3f5"/><path d="M9 4l19 1-1 23-20-2z" fill="#f6f9fe" stroke="#c5d3e8"/><path d="M20 10h6M20 13h6M20 16h6M12 20h13M12 23h13" stroke="#2f5597" stroke-width="1.700"/><text x="9" y="17" font-family="Liberation Serif" font-size="12" font-weight="bold" font-style="italic" fill="#1f4693">W</text></svg></div>
  <div class="d-flex align-items-center ms-auto">
    <svg width="16" height="10"><path d="M.5 9L8 1.500 15.500 9" fill="none" stroke="#fff" stroke-width="1.400"/></svg>
    <svg style="margin-left:11px" width="21" height="18"><path d="M4 13a4 4 0 0 1 0-7 6 6 0 0 1 11-1 4 4 0 0 1 1 8z" fill="#1d8fe1"/><path d="M2 7q2-2 4-1l8 7H4Q0 11 2 7z" fill="#0a62bd"/><circle cx="15" cy="12" r="5.500" fill="#8f8f8f"/><path d="M13.500 9.500v5M16.500 9.500v5" stroke="#fff" stroke-width="1.200"/></svg>
    <svg style="margin-left:13px" width="14" height="21"><rect x="3" y="0" width="8" height="14" fill="#fff"/><path d="M.8 9v3.500q0 4 4 4h4q4 0 4-4V9M7 16v4M3.500 20h7" fill="none" stroke="#fff" stroke-width="1.300"/></svg>
    <svg style="margin-left:14px" width="20" height="13"><rect x=".7" y=".7" width="16.500" height="11.500" fill="none" stroke="#fff" stroke-width="1.300"/><rect x="3" y="3" width="11.500" height="7" fill="#fff"/><rect x="17.500" y="4" width="2" height="5" fill="#fff"/></svg>
    <svg style="margin-left:13px" width="16" height="16" fill="none" stroke="#ddd" stroke-width="1.300"><path d="M1 15A14 14 0 0 1 15 1M4.500 15A10.500 10.500 0 0 1 15 5M8 15a7 7 0 0 1 7-6"/><circle cx="13" cy="14" r="1.500" fill="#fff"/></svg>
    <svg style="margin-left:11px" width="19" height="14" fill="none" stroke="#fff" stroke-width="1.200"><path d="M1 4.500h3l4-4v13l-4-4H1zM11 4l6.500 6.500M17.500 4L11 10.500"/></svg>
    <span style="margin-left:15px;font-size:14.500px" data-w="29">ENG</span>
    <div class="text-center" style="margin-left:16px;width:77px;font-size:14.500px;line-height:23px"><span data-w="35">20:22</span><br><span data-w="76">17-09-2020</span></div>
    <svg style="margin-left:24px" width="32" height="32" viewBox="0 0 32 32"><path d="M1 1h20v14H9l-3 4v-4H1z" fill="#fff"/><path d="M5 5h12M5 8h12M5 11h8" stroke="#2d241c"/><circle cx="20.500" cy="21.500" r="9.500" fill="#3b3835" stroke="#8b8987"/><text x="20.500" y="27" text-anchor="middle" font-size="15" font-weight="bold" fill="#fff">3</text></svg>
    <div style="width:1px;height:50px;background:#75706b;margin:0 5px 0 12px"></div>
  </div>
</div>

<script>
// stretch labels to their designed widths
function fit(root){root.querySelectorAll('[data-w]').forEach(function(e){
  var w=+e.dataset.w,n=e.textContent.length,nat=e.getBoundingClientRect().width;
  e.style.letterSpacing=((w-nat)/n).toFixed(3)+'px';e.style.width=w+'px';});}
// control gallery icons
var g=[
'<use href="#ic-list"/>','<path d="M1 1l14 14" stroke="#222"/>',
'<path d="M3 3.500H.5v12h15v-12H13" fill="none" stroke="#222"/><path d="M4 1l2 3M6 1L4 4M7.500 1l1 1.500L9.500 1M8.500 2.500V4M11 1h2l-2 3h2" stroke="#27366b" fill="none" stroke-width=".8"/>',
'<path d="M4 6V2h9v4" fill="#555"/><path d="M3 5.500h8" stroke="#bbb" stroke-width="2"/><path d="M3 15v-5h9l-3 5z" fill="#444"/><path d="M4 9h8" stroke="#ccc"/>',
'<rect x="0" y="7" width="5" height="8" fill="#3f76cc"/><rect x="5" y="1" width="5" height="14" fill="#f2b32b" stroke="#b77b11" stroke-width=".6"/><rect x="10" y="4" width="5" height="11" fill="#d8472a" stroke="#8f2714" stroke-width=".6"/>',
'<path d="M5 1v5h10V1M5 15V9.500h10V15M8 3h5M8 12.500h5" fill="none" stroke="#5f7aab"/><path d="M0 4.500l4 3.300-4 3.200z" fill="#3b77d8"/>',
'<rect x=".5" y="2.500" width="15" height="11" fill="#fff" stroke="#6d83aa"/><path d="M2 5h6M2 8h6M2 11h6" stroke="#7d8cab" stroke-width="1.500"/><rect x="9.500" y="3" width="6" height="10" fill="#ccd7e8"/><path d="M11 7h3l-1.500-2zM11 9h3l-1.500 2z" fill="#1e2c48"/>',
'<rect x=".5" y="2.500" width="15" height="11" fill="url(#gw)" stroke="#5c7ca8"/>',
'<rect x="2.500" y="2.500" width="11" height="11" fill="#f6f9fd" stroke="#7b8eb0"/><path d="M5 8l2.500 2.500L12 5" fill="none" stroke="#222" stroke-width="1.800"/>',
'<path d="M.5 14.500v-12h4v3h3v-2h3v2h5v9z" fill="url(#gw)" stroke="#7189b0"/>',
'<rect x=".5" y="1.500" width="15" height="13" fill="#cfe4f8" stroke="#56779f"/><path d="M1 11h14v3H1z" fill="#c58a3d"/><path d="M5 13V3M2 6v3h3M8 5v4H5" stroke="#188a35" stroke-width="2" fill="none"/><circle cx="12" cy="5" r="2" fill="#f5b93a"/>',
'<circle cx="6.500" cy="6" r="6" fill="#3d8fd0"/><path d="M3 2q4-1 5 2t-4 4-2-6z" fill="#55b04c"/><path d="M6 12a2.500 2.500 0 0 1 5 0 2.500 2.500 0 0 1-5 0M10 13a2.500 2.500 0 0 1 5 0 2.500 2.500 0 0 1-5 0" fill="none" stroke="#62779b" stroke-width="1.500"/>',
'<rect x=".5" y="2.500" width="15" height="12" fill="#fff" stroke="#4b5f86"/><path d="M1 4h14" stroke="#4b5f86"/><path d="M3 6.500h4M3 9h4M3 11.500h4M9 6.500h4M9 9h4M9 11.500h4" stroke="#3a4d70" stroke-width="1.300"/>',
'<rect x=".5" y="2.500" width="15" height="13" fill="#cfe4f8" stroke="#222"/><path d="M3 0l2 3M5 0L3 3M7 0l1 1.500L9 0M11 0h2l-2 3h2" stroke="#27366b" fill="none"/><path d="M6 14V5M3 8v2h3M9 7v4H6" stroke="#188a35" stroke-width="2" fill="none"/><path d="M10 12h5" stroke="#c58a3d" stroke-width="4"/><circle cx="12.500" cy="7" r="1.500" fill="#f5b93a"/>',
'<circle cx="8" cy="8" r="5.500" fill="#f0f4fa" stroke="#8e9db8"/><circle cx="8" cy="8" r="2.800" fill="#56617a"/>',
'<path d="M5.500 15.500v-9h4v2h6v7z" fill="url(#gw)" stroke="#8ba0c2"/><path d="M1 1l5 5M6 1L1 6M3.500 0v7M0 3.500h7" stroke="#a8b8d3" stroke-dasharray="1 1"/>',
'<rect x="1.500" y="1.500" width="13" height="13" fill="#d9e9fa" stroke="#4c6c9f"/><path d="M2 13l6-6 6 7H2z" fill="#2d4e8d"/><circle cx="10" cy="5" r="2" fill="#f0a04b"/><path d="M2 11l4-3" stroke="#d46a3a" stroke-width="2"/>',
'<path d="M10.500 4v8a2.500 2.500 0 0 1-5 0V3.500a1.800 1.800 0 0 1 3.500 0V11" fill="none" stroke="#9daabe" stroke-width="1.300"/>'];
ctlgrid.innerHTML=g.map(function(s){return '<svg width="16" height="16" viewBox="0 0 16 16">'+s+'</svg>'}).join('');
// status bar view buttons
var v=['<path d="M.5 1.500h15v12H.5zM1 3h14" stroke="#555" stroke-width="1.500" fill="#fff"/><path d="M3 7h4M3 10h4M9 7h4v3H9z" stroke="#555" fill="none"/>',
'<path d="M.5 1.500h15v12H.5zM1 3h14M4.500 2v11" stroke="#555" stroke-width="1.500" fill="#fff"/><path d="M7 7h3M7 10h3M11 7h3M11 10h3" stroke="#555"/>',
'<path d="M2 6h11v8H2zM5 2h5v12M8 2v12M2 9h11" stroke="#555" stroke-width="1.500" fill="#e8e8e8"/><path d="M13 5v7h2" stroke="#555" fill="none"/>',
'<path d="M3 6h3v8H3zM7 2h3v12H7z" stroke="#555" fill="#eee" stroke-width="1.500"/><path d="M2 14h13v-4h-3" stroke="#555" fill="none" stroke-width="1.500"/>',
'<path d="M4 3h8v10H4z" fill="#fff" stroke="#555" stroke-width="1.500"/><path d="M1 2h14M1 14h14M1 6h2M1 10h2M13 6h2M13 10h2M6 6h4M6 9h4" stroke="#555" stroke-width="1.300"/>',
'<path d="M2 7v7h12l-3-4z" fill="#77736a" stroke="#555"/><path d="M1 3l6 7 8-8" fill="none" stroke="#555" stroke-width="2.500"/>'];
vb.innerHTML=v.map(function(s,i){return '<div class="d-flex align-items-center justify-content-center'+(i==5?' hot':'')+'"><svg width="16" height="16" viewBox="0 0 16 16">'+s+'</svg></div>'}).join('');
// rulers and design grid, one centimetre = 47.25px
var U=47.27,V=47.25,s='',i,q,x,y;
function R(x,y,w,h,f){return '<rect x="'+x+'" y="'+y+'" width="'+w+'" height="'+h+'" fill="'+f+'"/>'}
s+=R(0,0,1187,52,'#c1dbfc')+R(0,0,1187,1.5,'#fff');
s+=R(28,3,1159,1,'#6a95d9')+R(28,5,1159,19,'#fff')+R(28,24,1159,1,'#bddcfb')+R(28,25,1159,1,'#fff')+R(28,28,1159,1,'#6a95d9')+R(28,31,1159,1,'#fff')+R(28,3,1,22,'#6a95d9');
s+=R(28,28,1,24,'#6a95d9')+R(29,50,1158,1,'#6a95d9')+R(29,51,1158,1,'#000');
s+='<rect x="4.500" y="3.500" width="21" height="21" fill="none" stroke="#6a95d9"/><rect x="5.500" y="4.500" width="19" height="19" fill="none" stroke="#fff"/>'+R(10,8,11,12,'#000');
s+=R(4,28,22,1,'#6a95d9')+R(4,28,1,24,'#6a95d9')+R(25,28,1,24,'#6a95d9')+'<rect x="5.500" y="31.500" width="18" height="19" fill="#c6defd" stroke="#6a95d9"/>'+R(5,31,18,1,'#fff')+R(5,31,1,20,'#fff');
for(i=0;i<24.500;i++){for(q=0;q<4;q++){x=76.3+U*(i-1)+U*q/4;if(x>1184||x<34)continue;
  if(q==0){if(i>0)s+='<text x="'+x+'" y="19" text-anchor="middle" font-family="Liberation Sans" font-size="12.500" fill="#111" textLength="'+(i>9?11:5.500)+'" lengthAdjust="spacingAndGlyphs">'+i+'</text>'}
  else s+=R(Math.round(x),9,1,q==2?7:4,'#111');}
  if(i%4==3)s+=R(Math.round(76.300+U*(i-1))-1,0,1,30,i<14?'#e6f2fe':'#86aee4');}
s+='<path d="M33.500 37.500l4-4H45l-2.500 2.500v4l-3 1.500 1 2.500-1 0z" fill="#000"/><text x="48" y="46" font-size="13.500" fill="#15213f" textLength="33">Detail</text>';
rul.innerHTML=s;
s=R(0,0,29,729,'#c1dbfc')+R(4,0,1,729,'#6a95d9')+R(5,0,18,729,'#fff')+R(25,0,1,729,'#6a95d9')+R(23,0,1,729,'#e8f2fe')+R(28,0,1,729,'#5b8bd6');
for(i=0;i<16;i++)for(q=0;q<4;q++){y=V*i+V*q/4-.500;if(y>722||y<2)continue;
  if(q==0)s+='<text x="13.500" y="'+(y+6.500)+'" text-anchor="middle" font-family="Liberation Sans" font-size="12.500" fill="#111" textLength="'+(i>9?10:5.500)+'" lengthAdjust="spacingAndGlyphs">'+i+'</text>';
  else s+=R(q==2?10:11,Math.floor(y),q==2?7:3,1,'#111');}
vrul.innerHTML=s;
s='';
for(i=1;i<16;i++){x=Math.round(47.2+U*(i-1)-.3);s+=R(x,0,1,729,'#3c3c3c');}
for(i=1;i<16;i++){y=Math.floor(V*i-.6);s+=R(0,y,722,1,'#3c3c3c');if(i%4==3)s+=R(0,y-1,722,1,'#fff');}
for(i=3;i<16;i+=4)s+=R(Math.round(46.900+U*(i-1))-1,0,1,729,'#fff');
s+=R(722,0,1,729,'#000')+R(723,0,435,729,'#a3c2ea');
gridsvg.innerHTML=s;
// calculator form controls: x, y, w, h, caption, font size, caption width
var K=[[329,414,50,50,'<svg width="32" height="23" viewBox="0 0 32 23"><path d="M1 11.500L11 1h20v21H11z" fill="none" stroke="#000" stroke-width="1.700"/><path d="M15 6l11 11M26 6L15 17" stroke="#000" stroke-width="1.400"/></svg>'],[395,414,45,50,'C',31,18],[457,414,54,50,'±',32,17],[532,414,50,50,'+',32,17],[603,414,55,50,'Sin',22.5,30],
[329,489,50,51,'7',32,17],[395,489,45,51,'8',32,17],[461,489,50,51,'9',32,17],[532,489,50,51,'-',32,10],[603,489,54,51,'Cos',22.5,35],
[329,560,50,51,'4',32,17],[395,560,46,51,'5',32,17],[457,565,54,50,'6',32,17],[532,565,50,50,'x',31,15],[603,565,54,50,'Tan',22.5,36],
[329,631,50,50,'1',32,17],[395,631,50,50,'2',32,17],[457,631,54,50,'3',32,17],[532,631,50,50,'/',32,13],[603,636,54,115,'=',32,17],
[329,702,50,50,'0',32,18],[395,702,50,50,'.',32,8],[457,702,59,45,'Mod',22.5,46],[532,702,50,50,'Sq',22.5,24]];
calc.innerHTML='<div class="calcpanel"></div><div class="calcdisp">0</div>'+K.map(function(k){
  return '<div class="key" style="left:'+(k[0]-214)+'px;top:'+(k[1]-201)+'px;width:'+k[2]+'px;height:'+k[3]+'px;font-size:'+(k[5]||16)+'px">'+(k[5]?'<span data-w="'+k[6]+'" class="text-center">'+k[4]+'</span>':k[4])+'</div>'}).join('');
// property rows
var P='Record Source|;Caption|;Pop Up|No;Modal|No;Display on SharePoint Site|Follow Table Setting;Default View|Single Form;Allow Form View|Yes;Allow Datasheet View|Yes;Allow PivotTable View|Yes;Allow PivotChart View|Yes;Allow Layout View|Yes;Picture|(none);Picture Tiling|No;Picture Alignment|Center;Picture Type|Embedded;Picture Size Mode|Clip;Width|15.291cm;Auto Center|No;Auto Resize|Yes;Fit to Screen|Yes;Border Style|Sizable;Record Selectors|Yes;Navigation Buttons|Yes;Navigation Caption|;Dividing Lines|No;Scroll Bars|Both;Control Box|Yes;Close Button|Yes;Min Max Buttons|Both Enabled;Moveable|No;Split Form Size|Auto;Split Form Orientation|Datasheet on Top;Split Form Splitter Bar|Yes;Split Form Datasheet|Allow Edits;Split Form Printing|Form Only;Save Splitter Bar Position|Yes;Subdatasheet Expanded|No;|'.split(';');
props.innerHTML=P.map(function(p,i){p=p.split('|');return '<div class="prow d-flex"><div class="pn">'+p[0]+'</div><div class="pv'+(i?'':' d-flex justify-content-end')+'">'+(i?p[1]:'<div class="sb d-flex align-items-center justify-content-center" style="width:20px"><svg width="9" height="6"><path d="M.5.500l4 4.500L8.500.500" fill="none" stroke="#444"/></svg></div><div class="sb d-flex align-items-center justify-content-center" style="width:19px;margin-left:1px"><svg width="9" height="2"><path d="M0 1h9" stroke="#000" stroke-width="2" stroke-dasharray="2 1.500"/></svg></div>')+'</div></div>'}).join('');
fit(document);
</script>
</body>
</html>
